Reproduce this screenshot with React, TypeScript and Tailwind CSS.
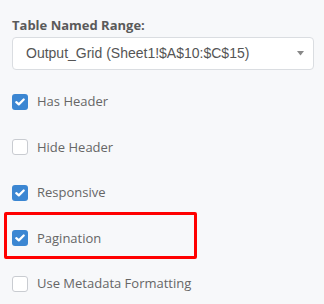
import React from 'react'

const items = [
  { label: 'Has Header', checked: true },
  { label: 'Hide Header', checked: false },
  { label: 'Responsive', checked: true },
  { label: 'Pagination', checked: true, highlight: true },
  { label: 'Use Metadata Formatting', checked: false },
]

function Box({ checked }: { checked: boolean }) {
  if (checked) {
    return (
      <span className="flex h-[16px] w-[16px] items-center justify-center rounded-[3px] bg-[#3b86d2]">
        <svg width="10" height="8" viewBox="0 0 10 8">
          <path d="M1.3 4.2 L3.8 6.4 L8.7 1.5" fill="none" stroke="#fff" strokeWidth="2.2" strokeLinecap="round" strokeLinejoin="round" />
        </svg>
      </span>
    )
  }
  return <span className="h-[16px] w-[16px] rounded-[3px] border border-[#c9ccd1] bg-white" />
}

export default function App() {
  return (
    <div className="h-[304px] w-[324px] overflow-hidden bg-[#f7f8fa] font-['Open_Sans',sans-serif]">
      <div className="px-[12px] pt-[16px]">
        <div className="text-[13px] font-bold leading-[18px] text-[#5a5a5a]">Table Named Range:</div>
        <div className="mt-[3px] flex h-[33px] w-[302px] items-center justify-between rounded-[4px] border border-[#dadde1] bg-white pl-[13px] pr-[9px]">
          <span className="font-['Liberation_Sans',sans-serif] text-[14px] text-[#555]">Output_Grid (Sheet1!$A$10:$C$15)</span>
          <svg width="7" height="5" viewBox="0 0 7 5">
            <path d="M0 0 H7 L3.5 4.5 Z" fill="#888" />
          </svg>
        </div>
      </div>
      <div className="mt-[9px] flex flex-col">
        {items.map((it) => (
          <div key={it.label} className="relative flex h-[45.5px] items-center gap-[9px] pl-[12px]">
            <Box checked={it.checked} />
            <span className="text-[13px] text-[#666]">{it.label}</span>
            {it.highlight && (
              <div className="absolute left-[4px] top-[-4px] h-[47px] w-[193px] rounded-[2px] border-[3px] border-[#ff0000]" />
            )}
          </div>
        ))}
      </div>
    </div>
  )
}
